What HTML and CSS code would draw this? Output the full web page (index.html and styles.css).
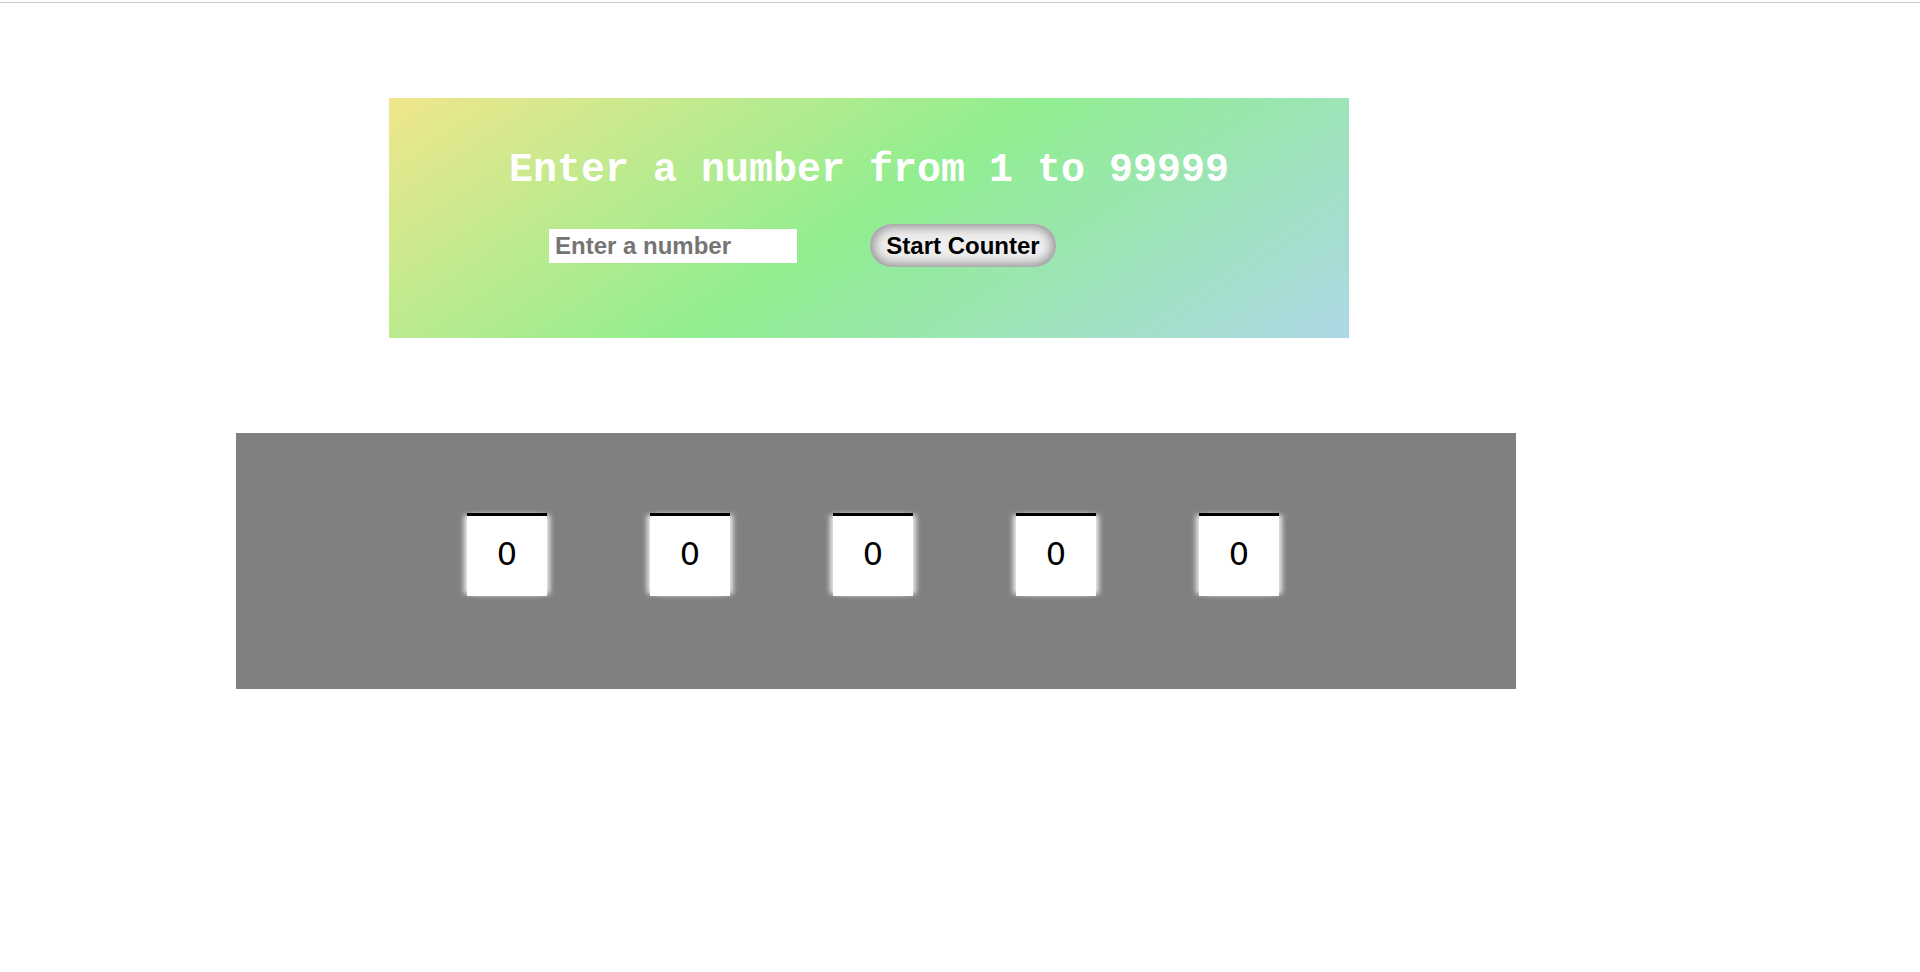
FILE: index.html
```html
<!DOCTYPE html>
<html lang="en">
<head>
<meta charset="utf-8">
<title>Counter</title>
<link rel="stylesheet" href="styles.css">
</head>
<body>
<div class="topline"></div>
<section class="hero">
  <h1 class="hero-title">Enter a number from 1 to 99999</h1>
  <div class="hero-row">
    <input class="num-input" type="text" placeholder="Enter a number">
    <button class="start-btn" type="button">Start Counter</button>
  </div>
</section>
<section class="counter">
  <div class="digit">0</div>
  <div class="digit">0</div>
  <div class="digit">0</div>
  <div class="digit">0</div>
  <div class="digit">0</div>
</section>
</body>
</html>
```
FILE: styles.css
```css
html, body {
  margin: 0;
  padding: 0;
  background: #ffffff;
}
body {
  font-family: "Liberation Sans", Arial, sans-serif;
}
.topline {
  height: 1px;
  margin-top: 2px;
  background: #c8c8c8;
}
.hero {
  box-sizing: border-box;
  width: 960px;
  height: 240px;
  margin: 95px 0 0 389px;
  padding-top: 50px;
  background: linear-gradient(146deg, #f0e68c 0%, #90ee90 50%, #add8e6 100%);
}
.hero-title {
  margin: 0;
  font-family: "Liberation Mono", "Courier New", monospace;
  font-weight: bold;
  font-size: 40px;
  line-height: normal;
  color: #ffffff;
  text-align: center;
}
.hero-row {
  display: flex;
  align-items: center;
  gap: 73px;
  margin-top: 31px;
  padding-left: 160px;
}
.num-input {
  box-sizing: border-box;
  width: 248px;
  height: 34px;
  margin: 0;
  padding: 0 6px;
  border: none;
  outline: none;
  background: #ffffff;
  font-family: "Liberation Sans", Arial, sans-serif;
  font-weight: bold;
  font-size: 24px;
  color: #000;
}
.num-input::placeholder {
  color: #757575;
  opacity: 1;
}
.start-btn {
  box-sizing: border-box;
  width: 186px;
  height: 43px;
  margin: 0;
  padding: 0;
  border: none;
  border-radius: 22px;
  background: #efefef;
  box-shadow: inset 0 0 12px 3px #8c8c8c;
  font-family: "Liberation Sans", Arial, sans-serif;
  font-weight: bold;
  font-size: 24px;
  color: #000;
}
.counter {
  box-sizing: border-box;
  display: flex;
  gap: 103px;
  width: 1280px;
  height: 256px;
  margin: 95px 0 0 236px;
  padding: 80px 0 0 231px;
  background: #808080;
}
.digit {
  box-sizing: border-box;
  width: 80px;
  height: 83px;
  border-top: 3px solid #000;
  background: #ffffff;
  box-shadow: 5px 0 5px -2px rgba(255,255,255,0.85), -5px 0 5px -2px rgba(255,255,255,0.85);
  display: flex;
  align-items: center;
  justify-content: center;
  padding-bottom: 4px;
  font-family: "DejaVu Sans", sans-serif;
  font-size: 32px;
  color: #000;
}
```
